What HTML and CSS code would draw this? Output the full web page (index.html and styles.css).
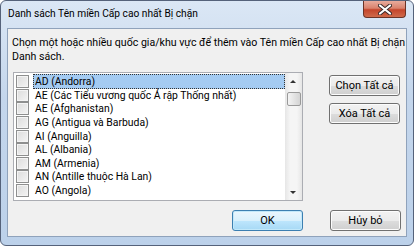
FILE: index.html
```html
<!DOCTYPE html>
<html lang="vi">
<head>
    <meta charset="UTF-8">
    <title>Danh sách Tên miền Cấp cao nhất Bị chặn</title>
    <link rel="stylesheet" href="styles.css">
</head>
<body>
    <div class="window">
        <div class="titlebar">
            <span class="title">Danh sách Tên miền Cấp cao nhất Bị chặn</span>
            <div class="close">
                <svg width="14" height="11" viewBox="0 0 14 11">
                    <path d="M2 1.5 L12 9.5 M12 1.5 L2 9.5" stroke="#3a2a2a" stroke-width="4" stroke-linecap="round"/>
                    <path d="M2 1.5 L12 9.5 M12 1.5 L2 9.5" stroke="#fff" stroke-width="2.2" stroke-linecap="round"/>
                </svg>
            </div>
        </div>
        <div class="client">
            <p class="prompt">Chọn một hoặc nhiều quốc gia/khu vực để thêm vào Tên miền Cấp cao nhất Bị chặn<br>Danh sách.</p>
            <div class="main">
                <div class="listbox">
                    <div class="items">
                        <div class="item selected"><span class="check"></span><span class="label">AD (Andorra)</span></div>
                        <div class="item"><span class="check"></span><span class="label">AE (Các Tiểu vương quốc Ả rập Thống nhất)</span></div>
                        <div class="item"><span class="check"></span><span class="label">AE (Afghanistan)</span></div>
                        <div class="item"><span class="check"></span><span class="label">AG (Antigua và Barbuda)</span></div>
                        <div class="item"><span class="check"></span><span class="label">AI (Anguilla)</span></div>
                        <div class="item"><span class="check"></span><span class="label">AL (Albania)</span></div>
                        <div class="item"><span class="check"></span><span class="label">AM (Armenia)</span></div>
                        <div class="item"><span class="check"></span><span class="label">AN (Antille thuộc Hà Lan)</span></div>
                        <div class="item"><span class="check"></span><span class="label">AO (Angola)</span></div>
                    </div>
                    <div class="scrollbar">
                        <div class="arrow up"></div>
                        <div class="thumb"></div>
                        <div class="track"></div>
                        <div class="arrow down"></div>
                    </div>
                </div>
                <div class="side-buttons">
                    <button class="btn">Chọn Tất cả</button>
                    <button class="btn">Xóa Tất cả</button>
                </div>
            </div>
            <div class="footer">
                <button class="btn default">OK</button>
                <button class="btn">Hủy bỏ</button>
            </div>
        </div>
    </div>
</body>
</html>
```

FILE: styles.css
```css
body {
    margin: 0;
    font-family: Roboto, "Noto Sans", sans-serif;
    font-size: 11px;
    color: #000;
    background: #fff;
}

.window {
    width: 414px;
    height: 246px;
    box-sizing: border-box;
    border: 1px solid #55627a;
    border-radius: 6px;
    background: linear-gradient(to bottom, #dbe7f5, #c4d6ec 40%, #bcd1ea);
    display: flex;
    flex-direction: column;
    overflow: hidden;
}

.titlebar {
    height: 27px;
    display: flex;
    align-items: flex-start;
    padding-left: 7px;
}

.title {
    margin-top: 5px;
    line-height: 16px;
    font-size: 10.2px;
}

.close {
    margin-left: auto;
    margin-right: 7px;
    width: 43px;
    height: 17px;
    box-sizing: border-box;
    border: 1px solid #6b3326;
    border-top: none;
    border-radius: 0 0 4px 4px;
    background: linear-gradient(to bottom, #e8ab9c, #d9826d 45%, #c4452b 55%, #cf6a4a);
    display: flex;
    align-items: center;
    justify-content: center;
}

.client {
    margin: 0 6px 8px 6px;
    flex: 1;
    border: 1px solid #8fa2bb;
    background: #f0f0f0;
    display: flex;
    flex-direction: column;
    padding: 0 5px 0 5px;
}

.prompt {
    margin: 7px 0 0 -1px;
    line-height: 14px;
    font-size: 10.6px;
    white-space: nowrap;
}

.main {
    margin-top: 8px;
    display: flex;
    align-items: flex-start;
}

.listbox {
    width: 290px;
    height: 129px;
    box-sizing: border-box;
    border: 1px solid #abadb3;
    background: #fff;
    display: flex;
}

.items {
    flex: 1;
    padding-top: 2px;
}

.item {
    height: 13.6px;
    display: flex;
    align-items: center;
    padding-left: 2px;
    white-space: nowrap;
    font-size: 10.4px;
}

.check {
    width: 11px;
    height: 11px;
    border: 1px solid #8e8f8f;
    background: linear-gradient(135deg, #dcdcdc, #f4f4f4);
    box-shadow: inset 0 0 0 1px #f4f4f4;
    flex: none;
}

.label {
    margin-left: 4px;
    padding: 0 2px;
    line-height: 13px;
    height: 13px;
}

.selected .label {
    flex: 1;
    background: #a4cbf2;
    outline: 1px dotted #333;
    outline-offset: -1px;
    height: 15px;
    line-height: 15px;
}

.scrollbar {
    width: 17px;
    background: linear-gradient(to right, #e6e6e6, #f5f5f5 30%, #f5f5f5 70%, #e6e6e6);
    display: flex;
    flex-direction: column;
    align-items: center;
}

.arrow {
    height: 17px;
    width: 17px;
    position: relative;
}

.arrow::after {
    content: "";
    position: absolute;
    left: 5px;
    width: 0;
    height: 0;
    border-left: 3px solid transparent;
    border-right: 3px solid transparent;
}

.arrow.up::after {
    top: 7px;
    border-bottom: 3px solid #333;
}

.arrow.down::after {
    top: 8px;
    border-top: 3px solid #333;
}

.thumb {
    width: 14px;
    height: 14px;
    box-sizing: border-box;
    border: 1px solid #9a9a9a;
    border-radius: 2px;
    background: linear-gradient(to right, #f4f4f4, #e4e4e4 50%, #d4d4d4);
    margin-top: 2px;
}

.track {
    flex: 1;
}

.side-buttons {
    margin-left: 26px;
    margin-top: 3px;
    display: flex;
    flex-direction: column;
    gap: 7px;
}

.btn {
    width: 71px;
    height: 21px;
    padding: 0;
    font-family: Roboto, "Noto Sans", sans-serif;
    font-size: 11px;
    color: #000;
    border: 1px solid #707070;
    border-radius: 3px;
    background: linear-gradient(to bottom, #f2f2f2, #ebebeb 50%, #dddddd 51%, #cfcfcf);
    box-shadow: inset 0 0 0 1px #fcfcfc;
}

.btn.default {
    border-color: #3c7fb1;
    background: linear-gradient(to bottom, #eaf6fd, #d9f0fc 50%, #bee6fd 51%, #a7d9f5);
    box-shadow: inset 0 0 0 1px #c2e8fa;
}

.footer {
    margin-top: 9px;
    display: flex;
    justify-content: flex-end;
    gap: 27px;
}
```
